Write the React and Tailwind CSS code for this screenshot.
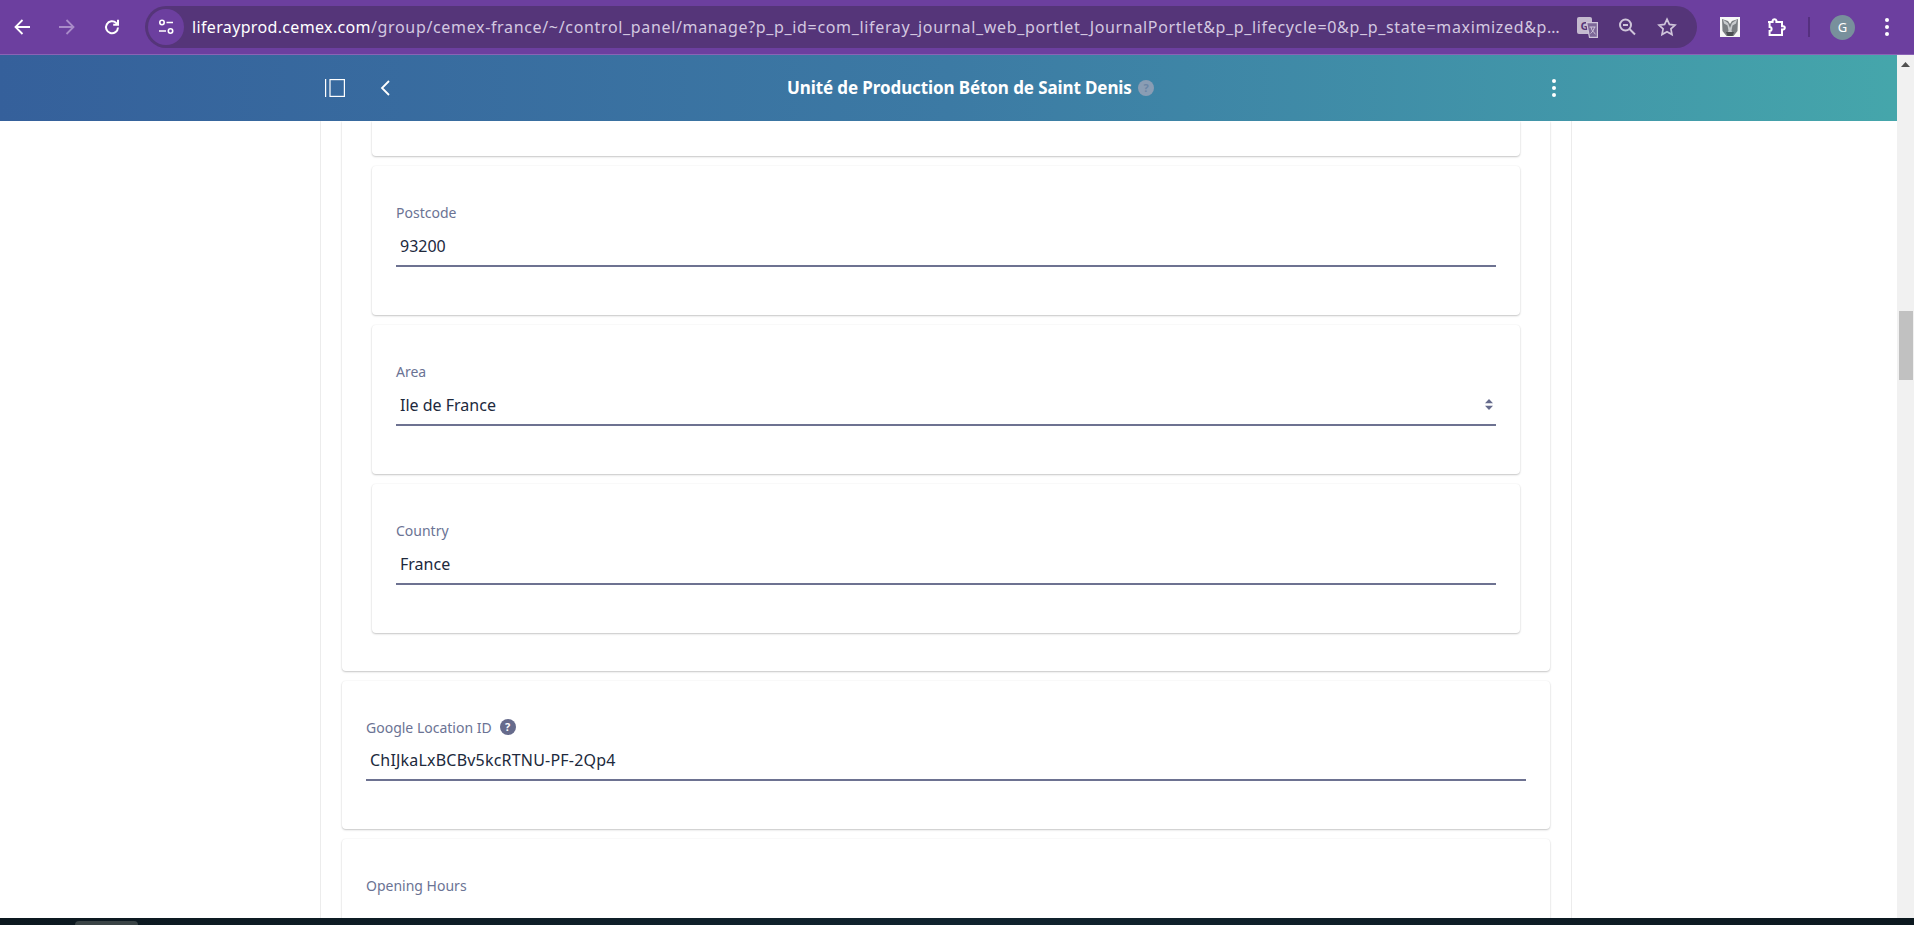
const URL_PATH =
  '/group/cemex-france/~/control_panel/manage?p_p_id=com_liferay_journal_web_portlet_JournalPortlet&p_p_lifecycle=0&p_p_state=maximized&p_p_mode=view&_com_liferay';

function ToolIcon({ children, className = 'w-[20px] h-[20px]', color = '#fff', sw = 2 }) {
  return (
    <svg viewBox="0 0 20 20" fill="none" stroke={color} strokeWidth={sw} className={className}>
      {children}
    </svg>
  );
}

function BrowserBar() {
  return (
    <div className="h-[55px] shrink-0 bg-[#6c3f9f] border-b border-[#8a63b5] flex items-center font-['Noto_Sans',sans-serif]">
      <div className="w-[145px] shrink-0 flex items-center pl-[12px] gap-[25px]">
        <ToolIcon sw={1.8}>
          <path d="M18 10H4M10.500 3 3.500 10l7 7" />
        </ToolIcon>
        <ToolIcon color="#a98cc9" sw={1.8}>
          <path d="M2 10h14M9.500 3l7 7-7 7" />
        </ToolIcon>
        <ToolIcon>
          <path d="M16 10.500a6 6 0 1 1-1.800-4.600L16 7.500M16 2.800v4.900h-4.800" />
        </ToolIcon>
      </div>
      <div className="w-[1552px] h-[42px] shrink-0 rounded-full bg-[#553579] flex items-center pl-[3px]">
        <div className="w-[36px] h-[36px] shrink-0 rounded-full bg-[#6c3f9f] flex items-center justify-center">
          <svg viewBox="0 0 20 20" fill="none" stroke="#fff" strokeWidth="1.6" className="w-[20px] h-[20px]">
            <circle cx="6" cy="5.500" r="2.200" />
            <path d="M10.500 5.500H17M3 14h7" />
            <circle cx="14.500" cy="14" r="2.200" />
          </svg>
        </div>
        <div className="w-[1371px] ml-[8px] truncate text-[16px] leading-[22px] text-[#d3c8e0] tracking-[0.66px]">
          <span className="text-white tracking-[0.35px]">liferayprod.cemex.com</span>
          {URL_PATH}
        </div>
        <div className="relative w-[21px] h-[21px] ml-[14px] shrink-0">
          <div className="w-[15px] h-[17px] bg-[#c4bacf] rounded-[2px] text-[#553579] text-[11px] leading-[17px] font-bold text-center">G</div>
          <svg viewBox="0 0 12 16" className="absolute right-0 bottom-0 w-[12px] h-[16px]" fill="#7d6898" stroke="#cfc5da" strokeWidth="1.2">
            <path d="M.6.6h10.800v14.800H3.500z" />
            <path d="M3.500 5h6M5 5c.5 3 2 5 4.500 7M8.500 5c-.5 2.500-2 5-4 6.500" fill="none" strokeWidth="1" />
          </svg>
        </div>
        <ToolIcon color="#cfc5da" className="w-[20px] h-[20px] ml-[19px] shrink-0">
          <circle cx="8.500" cy="8" r="5.500" />
          <path d="M6 8h5M12.500 12l5.500 5.500" />
        </ToolIcon>
        <svg viewBox="0 0 20 20" fill="none" stroke="#cfc5da" strokeWidth="1.7" className="w-[20px] h-[20px] ml-[20px] shrink-0">
          <path d="m10 2.200 2.400 5.200 5.600.7-4.100 3.800 1.100 5.600-5-2.800-5 2.800 1.100-5.600L2 8.100l5.600-.7z" />
        </svg>
      </div>
      <div className="flex-1 flex items-center pl-[23px]">
        <svg viewBox="0 0 20 20" className="w-[20px] h-[20px] shrink-0">
          <rect width="20" height="20" fill="#f6f6f6" />
          <path d="M2 2 8 4l2 3 2-3 6-2-.5 12-4 5h-7l-4-5z" fill="#7a7e82" />
          <path d="M3 2.500 8 6l2 5 2-5 5-3.500-1 4-3.500 2-1 5 1 3-2.500 2-2.500-2 1-3-1-5-3.500-2z" fill="#c8cbce" />
          <path d="M6 15h8l-1.500 4h-5z" fill="#4b4e52" />
        </svg>
        <svg viewBox="0 0 20 20" fill="none" stroke="#fff" strokeWidth="2" className="w-[20px] h-[20px] ml-[26px] shrink-0">
          <path d="M2 5h4.600V3.600a2 2 0 0 1 3.800 0V5H16v4.200h1.200a1.600 1.600 0 0 1 0 3.200H16V18H3.600V14a2 2 0 0 0 0-4V5z" />
        </svg>
        <div className="w-[2px] h-[20px] bg-[#55307f] ml-[22px] shrink-0" />
        <div className="w-[25px] h-[25px] rounded-full bg-[#78909c] text-white text-[13px] leading-[25px] text-center ml-[20px] shrink-0">G</div>
        <div className="flex flex-col gap-[3px] ml-[30px] shrink-0">
          <span className="w-[4px] h-[4px] rounded-full bg-white" />
          <span className="w-[4px] h-[4px] rounded-full bg-white" />
          <span className="w-[4px] h-[4px] rounded-full bg-white" />
        </div>
      </div>
    </div>
  );
}

function PageHeader() {
  return (
    <div className="h-[66px] shrink-0 bg-linear-to-r from-[#35609b] via-[#3c7aa4] to-[#45a6ab] flex items-center text-white relative">
      <svg viewBox="0 0 20 18" fill="none" stroke="#fff" strokeWidth="1.2" className="w-[20px] h-[18px] ml-[325px] shrink-0">
        <path d="M.6 0v18" />
        <rect x="5" y=".6" width="14.400" height="16.800" />
      </svg>
      <svg viewBox="0 0 10 16" fill="none" stroke="#fff" strokeWidth="1.8" className="w-[10px] h-[16px] ml-[35px] shrink-0">
        <path d="M9 1 2 8l7 7" />
      </svg>
      <div className="absolute left-[787px] top-[21px] font-['Noto_Sans',sans-serif]">
        <span className="text-[17px] leading-[22px] font-bold whitespace-nowrap tracking-[-0.1px]">Unité de Production Béton de Saint Denis</span>
      </div>
      <div className="absolute left-[1138px] top-[25px] w-[16px] h-[16px] rounded-full bg-[#8a9db4] text-[#6c86a5] text-[11px] leading-[16px] font-bold text-center font-['Noto_Sans',sans-serif]">?</div>
      <div className="absolute left-[1552px] top-[24px] flex flex-col gap-[3px]">
        <span className="w-[4px] h-[4px] rounded-full bg-white" />
        <span className="w-[4px] h-[4px] rounded-full bg-white" />
        <span className="w-[4px] h-[4px] rounded-full bg-white" />
      </div>
    </div>
  );
}

function Field({ label, value, help, select, boxClass = 'h-[39px]', valueClass = '', className = 'h-[149px]' }) {
  return (
    <div className={`bg-white rounded-[4px] px-[24px] pt-[36px] shadow-[0_1px_2px_rgba(0,0,0,0.22),0_0_2px_rgba(0,0,0,0.05)] ${className}`}>
      <div className="h-[20px] flex items-center text-[14px] text-[#6b7394]">
        {label}
        {help && (
          <span className="ml-[8px] w-[16px] h-[16px] rounded-full bg-[#666b8c] text-white text-[11px] leading-[16px] font-bold text-center">?</span>
        )}
      </div>
      <div className={`mt-[6px] border-b-2 border-[#6d7291] flex items-center justify-between pl-[4px] pr-[3px] pb-[2px] text-[16px] text-[#20293c] ${boxClass}`}>
        <span className={valueClass}>{value}</span>
        {select && (
          <svg viewBox="0 0 8 11" className="w-[8px] h-[11px] fill-[#666b8c]">
            <path d="M4 0 8 4.200H0zM4 11 0 6.800h8z" />
          </svg>
        )}
      </div>
    </div>
  );
}

function Content() {
  return (
    <div className="flex-1 overflow-hidden bg-white font-['Noto_Sans',sans-serif]">
      <div className="ml-[320px] w-[1252px] px-[21px] border-x border-[#ececec] h-full">
        <div className="bg-white rounded-b-[4px] px-[30px] pb-[38px] shadow-[0_1px_2px_rgba(0,0,0,0.22),0_0_2px_rgba(0,0,0,0.05)]">
          <div className="h-[35px] bg-white rounded-b-[4px] shadow-[0_1px_2px_rgba(0,0,0,0.22),0_0_2px_rgba(0,0,0,0.05)]" />
          <div className="mt-[10px] flex flex-col gap-[10px]">
            <Field label="Postcode" value="93200" />
            <Field label="Area" value="Ile de France" select />
            <Field label="Country" value="France" />
          </div>
        </div>
        <Field
          className="mt-[10px] h-[148px]"
          boxClass="h-[38px]"
          valueClass="tracking-[0.2px]"
          label="Google Location ID"
          value="ChIJkaLxBCBv5kcRTNU-PF-2Qp4"
          help
        />
        <Field className="mt-[10px] h-[149px]" label="Opening Hours" />
      </div>
    </div>
  );
}

function ScrollBar() {
  return (
    <div className="w-[17px] shrink-0 bg-[#f1f1f1] flex flex-col items-center">
      <svg viewBox="0 0 9 5" className="w-[9px] h-[5px] mt-[7px] fill-[#505050]">
        <path d="M4.500 0 9 5H0z" />
      </svg>
      <div className="w-[14px] h-[69px] mt-[244px] bg-[#c1c1c1]" />
    </div>
  );
}

export default function App() {
  return (
    <div className="h-screen overflow-hidden flex flex-col bg-white">
      <BrowserBar />
      <div className="flex-1 min-h-0 flex">
        <div className="flex-1 min-w-0 flex flex-col">
          <PageHeader />
          <Content />
        </div>
        <ScrollBar />
      </div>
      <div className="h-[7px] shrink-0 bg-linear-to-r from-[#0c181f] via-[#10232e] to-[#0c181f] pt-[3px] pl-[75px]">
        <div className="w-[63px] h-[4px] rounded-t-[6px] bg-[#3a4446]" />
      </div>
    </div>
  );
}
